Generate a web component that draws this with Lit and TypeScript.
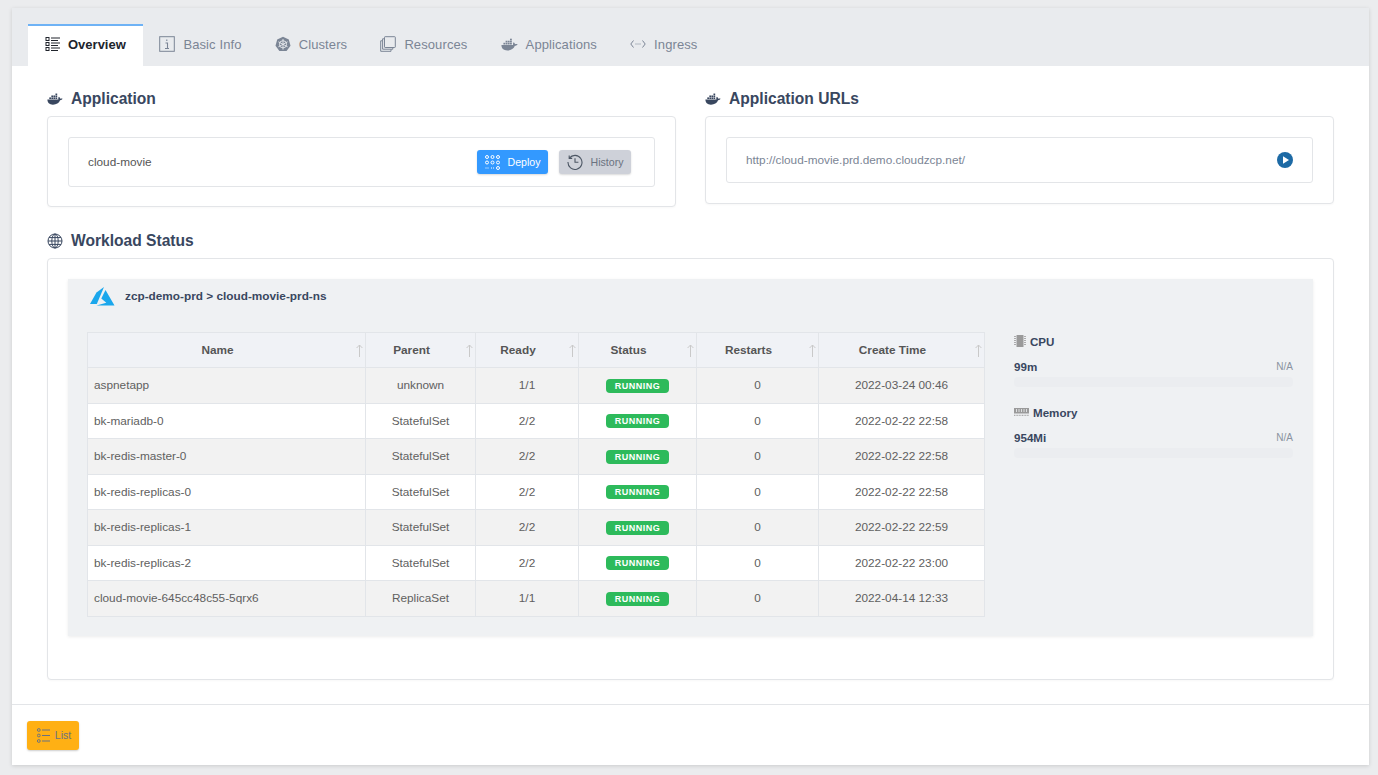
import { LitElement, html, css, svg } from "lit";
import { customElement } from "lit/decorators.js";

interface Row {
  name: string;
  parent: string;
  ready: string;
  time: string;
}

const ROWS: Row[] = [
  { name: "aspnetapp", parent: "unknown", ready: "1/1", time: "2022-03-24 00:46" },
  { name: "bk-mariadb-0", parent: "StatefulSet", ready: "2/2", time: "2022-02-22 22:58" },
  { name: "bk-redis-master-0", parent: "StatefulSet", ready: "2/2", time: "2022-02-22 22:58" },
  { name: "bk-redis-replicas-0", parent: "StatefulSet", ready: "2/2", time: "2022-02-22 22:58" },
  { name: "bk-redis-replicas-1", parent: "StatefulSet", ready: "2/2", time: "2022-02-22 22:59" },
  { name: "bk-redis-replicas-2", parent: "StatefulSet", ready: "2/2", time: "2022-02-22 23:00" },
  { name: "cloud-movie-645cc48c55-5qrx6", parent: "ReplicaSet", ready: "1/1", time: "2022-04-14 12:33" },
];

const COLUMNS = [
  { label: "Name", width: 278 },
  { label: "Parent", width: 110 },
  { label: "Ready", width: 103 },
  { label: "Status", width: 118 },
  { label: "Restarts", width: 122 },
  { label: "Create Time", width: 167 },
];

// whale, shared by the tabs and the section titles
const whale = (size: number) => html`<svg width=${size} height=${size} viewBox="0 0 24 24" fill="currentColor">
  <rect x="3.4" y="9.6" width="2.6" height="2.4" />
  <rect x="6.5" y="9.6" width="2.6" height="2.4" />
  <rect x="9.6" y="9.6" width="2.6" height="2.4" />
  <rect x="12.7" y="9.6" width="2.6" height="2.4" />
  <rect x="6.5" y="6.7" width="2.6" height="2.4" />
  <rect x="9.6" y="6.7" width="2.6" height="2.4" />
  <rect x="12.7" y="6.7" width="2.6" height="2.4" />
  <rect x="12.7" y="3.8" width="2.6" height="2.4" />
  <path d="M.6 12.8h16.6c-.5-1.3-.3-3 .7-4 1 .6 1.7 1.6 1.8 2.7 1.200-.5 2.800-.4 3.700.3-.7 1.500-2.200 2.200-3.800 2.100C18 18.300 14 20.500 9 20.500c-5.500 0-8.400-3.200-8.400-7.700z" />
</svg>`;

const overviewIcon = html`<svg width="16" height="16" viewBox="0 0 16 16" fill="none" stroke="currentColor">
  <rect x="1" y="1.500" width="3" height="3" /><rect x="1" y="6.500" width="3" height="3" /><rect x="1" y="11.500" width="3" height="3" />
  <path d="M6 2h9M6 4.500h7M6 7h9M6 9.500h7M6 12h9M6 14.500h7" stroke-width="1.100" />
</svg>`;

const infoIcon = html`<svg width="16" height="16" viewBox="0 0 16 16" fill="none" stroke="currentColor">
  <rect x=".7" y=".7" width="14.600" height="14.600" />
  <path d="M6.500 7h2v5M6 12.500h4M7.800 3.600v1.400" stroke-width="1.100" />
</svg>`;

const k8sIcon = html`<svg width="16" height="16" viewBox="0 0 16 16">
  <path fill="currentColor" d="M8 0l5.800 2.800 1.700 6.200-3.900 5.300H4.400L.5 9l1.700-6.200z" transform="translate(0 .8)" />
  <g stroke="#e9ebee" stroke-width=".9" fill="none">
    <circle cx="8" cy="8.300" r="3.600" />
    <path d="M8 3v10.600M3.400 5.800l9.200 5M12.600 5.800l-9.200 5" />
  </g>
</svg>`;

const resourcesIcon = html`<svg width="16" height="16" viewBox="0 0 16 16" fill="none" stroke="currentColor">
  <rect x="4.500" y=".7" width="10.800" height="10.800" rx=".6" />
  <path d="M4.500 2.800H2.600v10.400h10.200v-1.700M2.600 4.800H.7v10.500h10.300v-2.100" />
</svg>`;

const ingressIcon = html`<svg width="16" height="16" viewBox="0 0 16 16" fill="none" stroke="currentColor">
  <path d="M3.500 4.500L.8 8l2.700 3.500M12.500 4.500L15.200 8l-2.700 3.500" />
  <path d="M5.500 8h1M7.500 8h1M9.500 8h1" />
</svg>`;

const TABS = [
  { label: "Overview", icon: overviewIcon, active: true },
  { label: "Basic Info", icon: infoIcon },
  { label: "Clusters", icon: k8sIcon },
  { label: "Resources", icon: resourcesIcon },
  { label: "Applications", icon: whale(17) },
  { label: "Ingress", icon: ingressIcon },
];

const deployIcon = html`<svg width="15" height="15" viewBox="0 0 15 15" fill="none" stroke="currentColor" stroke-width="1">
  ${[2, 7.500, 13].map((y) =>
    [2, 7.500, 13].map((x) =>
      y === 13 && x < 13
        ? svg`<path d="M${x - 1.500} 13h3" stroke-dasharray="1 1" />`
        : svg`<circle cx=${x} cy=${y} r="1.500" />`,
    ),
  )}
</svg>`;

const historyIcon = html`<svg width="16" height="16" viewBox="0 0 16 16" fill="none" stroke="currentColor" stroke-width="1.100">
  <path d="M2.400 4.200A7 7 0 1 1 1 8" />
  <path d="M2.200 1.400v3h3M8 4.300V8.300h3.400" />
</svg>`;

const playIcon = html`<svg width="16" height="16" viewBox="0 0 16 16">
  <circle cx="8" cy="8" r="8" fill="#1d6aa5" />
  <path d="M6 4.200l6 3.800-6 3.800z" fill="#fff" />
</svg>`;

const globeIcon = html`<svg width="16" height="16" viewBox="0 0 16 16" fill="none" stroke="currentColor" stroke-width="1">
  <circle cx="8" cy="8" r="7" />
  <ellipse cx="8" cy="8" rx="3.200" ry="7" />
  <path d="M1 8h14M2 4.600h12M2 11.400h12M8 1v14" />
</svg>`;

const azureIcon = html`<svg width="25" height="19" viewBox="0 0 25 19">
  <path fill="#1aa7ec" d="M14 0L6.500 5.500 0 17h6.800z" />
  <path fill="#1aa7ec" d="M15.500 3l-4.200 8.500 5 4.200L6.500 18.400H24.500z" />
</svg>`;

const cpuIcon = html`<svg width="12" height="12" viewBox="0 0 12 12" fill="#9a9a9a">
  <rect x="2.500" y="0" width="7" height="12" rx=".5" />
  <path d="M0 1.500h2M0 3.500h2M0 5.500h2M0 7.500h2M0 9.500h2M10 1.500h2M10 3.500h2M10 5.500h2M10 7.500h2M10 9.500h2" stroke="#9a9a9a" stroke-width=".8" />
</svg>`;

const memoryIcon = html`<svg width="15" height="8" viewBox="0 0 15 8">
  <path fill="#9a9a9a" d="M0 0h15v5.500H0z" />
  <path d="M2.500 1v3M5 1v3M7.500 1v3M10 1v3M12.500 1v3" stroke="#eff1f3" stroke-width=".8" />
  <path d="M0 7.300h15" stroke="#9a9a9a" stroke-dasharray="1 .6" />
</svg>`;

const listIcon = html`<svg width="14" height="15" viewBox="0 0 14 15" fill="none" stroke="#6b7280" stroke-width="1">
  <circle cx="1.800" cy="2" r="1.400" /><circle cx="1.800" cy="7.500" r="1.400" /><circle cx="1.800" cy="13" r="1.400" />
  <path d="M5 2h8M5 7.500h8M5 13h8" stroke-width="1.200" />
</svg>`;

const sortIcon = html`<svg class="sort" width="7" height="13" viewBox="0 0 7 13" fill="none" stroke="#c9c9c9">
  <path d="M3.500 13V1M.6 4L3.500 1l2.900 3" />
</svg>`;

@customElement("app-root")
export class AppRoot extends LitElement {
  static styles = css`
    :host {
      display: block;
      width: 1378px;
      height: 775px;
      box-sizing: border-box;
      padding: 8px 9px 10px 12px;
      background: #ebecee;
      font-family: "Liberation Sans", Arial, sans-serif;
      color: #555;
      overflow: hidden;
    }

    .shell {
      display: flex;
      flex-direction: column;
      height: 100%;
      background: #fff;
      box-shadow: 0 1px 4px rgba(0, 0, 0, 0.14);
    }

    .tabs {
      display: flex;
      align-items: flex-end;
      height: 58px;
      box-sizing: border-box;
      padding-left: 16px;
      background: #e9ebee;
      flex: none;
    }

    .tab {
      display: flex;
      align-items: center;
      gap: 8px;
      height: 42px;
      box-sizing: border-box;
      padding: 0 16.600px 4px;
      border-top: 2px solid transparent;
      font-size: 13px;
      letter-spacing: 0.1px;
      color: #7b8595;
    }

    .tab.active {
      gap: 7px;
      padding: 0 17px 4px;
      background: #fff;
      border-top-color: #6eb2f5;
      font-weight: 700;
      letter-spacing: 0;
      color: #20242c;
    }

    .tab svg {
      display: block;
      flex: none;
    }

    .content {
      flex: 1;
      padding: 23px 35px 0;
    }

    .top {
      display: grid;
      grid-template-columns: 629px 629px;
      gap: 29px;
      align-items: start;
      margin-bottom: 24px;
    }

    .title {
      display: flex;
      align-items: center;
      gap: 8px;
      height: 18px;
      box-sizing: border-box;
      padding-top: 2px;
      margin-bottom: 9px;
      font-size: 15.600px;
      font-weight: 700;
      color: #39475f;
    }

    .box {
      border: 1px solid #e3e5e8;
      border-radius: 4px;
      padding: 20px;
      background: #fff;
      box-shadow: 0 1px 2px rgba(0, 0, 0, 0.03);
    }

    .box.app-box {
      padding-bottom: 19px;
    }

    .field {
      display: flex;
      align-items: center;
      justify-content: space-between;
      box-sizing: border-box;
      border: 1px solid #e3e5e8;
      border-radius: 3px;
      padding: 0 23px 0 19px;
      font-size: 11.800px;
      color: #555;
    }

    .field.app {
      height: 50px;
    }

    .field.url {
      height: 46px;
      padding-right: 19px;
      color: #7b8595;
    }

    .field.url svg {
      display: block;
    }

    .actions {
      display: flex;
      gap: 11px;
    }

    .btn {
      display: flex;
      align-items: center;
      justify-content: center;
      gap: 8px;
      height: 24px;
      border-radius: 3px;
      font-size: 10.600px;
      box-shadow: 0 1px 2px rgba(0, 0, 0, 0.15);
    }

    .btn.deploy {
      width: 71px;
      background: #3399ff;
      color: #fff;
    }

    .btn.history {
      width: 72px;
      background: #ced1d9;
      color: #6b7280;
    }

    .btn.history svg {
      color: #4b5563;
    }

    .status-box {
      height: 422px;
      box-sizing: border-box;
    }

    .panel {
      background: #eff1f3;
      box-shadow: 0 1px 3px rgba(0, 0, 0, 0.08);
      padding: 0 20px 19px 19px;
    }

    .panel-head {
      display: flex;
      align-items: center;
      gap: 10px;
      height: 53px;
      padding: 0 0 19px 3px;
      box-sizing: border-box;
      font-size: 11.800px;
      font-weight: 700;
      color: #39475f;
    }

    .panel-body {
      display: flex;
      gap: 29px;
    }

    table {
      border-collapse: collapse;
      table-layout: fixed;
      width: 897px;
      font-size: 11.800px;
      color: #606060;
      flex: none;
    }

    th,
    td {
      border: 1px solid #e2e5e9;
      padding: 0;
      text-align: center;
      box-sizing: border-box;
    }

    th {
      position: relative;
      height: 35px;
      padding-right: 18px;
      font-size: 11.800px;
      font-weight: 700;
      color: #555;
      background: #f0f2f6;
    }

    .sort {
      position: absolute;
      right: 2px;
      top: 11px;
    }

    td {
      height: 35.500px;
      background: #fff;
    }

    tr:nth-child(odd) td {
      background: #f2f2f2;
    }

    td.name {
      text-align: left;
      padding-left: 6px;
    }

    .badge {
      display: inline-block;
      width: 63px;
      height: 14px;
      line-height: 15px;
      border-radius: 4px;
      background: #2dba5b;
      color: #fff;
      font-size: 9px;
      font-weight: 700;
      letter-spacing: 0.5px;
      vertical-align: middle;
    }

    .side {
      flex: 1;
      font-size: 11.600px;
      font-weight: 700;
      color: #39475f;
    }

    .metric {
      margin-bottom: 16px;
    }

    .metric-head {
      display: flex;
      align-items: center;
      gap: 4px;
      height: 18px;
    }

    .metric-vals {
      display: flex;
      align-items: center;
      justify-content: space-between;
      height: 14px;
      margin: 9px 0 4px;
    }

    .na {
      font-size: 10px;
      font-weight: 400;
      color: #8a93a0;
    }

    .bar {
      height: 10px;
      border-radius: 4px;
      background: #ebedf0;
    }

    .footer {
      flex: none;
      display: flex;
      align-items: center;
      height: 61px;
      box-sizing: border-box;
      border-top: 1px solid #e3e5e8;
      padding-left: 15px;
    }

    .list-btn {
      display: flex;
      align-items: center;
      justify-content: center;
      gap: 4px;
      width: 52px;
      height: 29px;
      box-sizing: border-box;
      padding-left: 2px;
      border-radius: 3px;
      background: #ffb014;
      color: #6b7280;
      font-size: 10.500px;
      box-shadow: 0 1px 2px rgba(0, 0, 0, 0.2);
    }
  `;

  private renderMetric(icon: unknown, label: string, value: string) {
    return html`
      <div class="metric">
        <div class="metric-head">${icon}<span>${label}</span></div>
        <div class="metric-vals"><span>${value}</span><span class="na">N/A</span></div>
        <div class="bar"></div>
      </div>
    `;
  }

  render() {
    return html`
      <div class="shell">
        <div class="tabs">
          ${TABS.map(
            (t) => html`<div class="tab ${t.active ? "active" : ""}">${t.icon}<span>${t.label}</span></div>`,
          )}
        </div>

        <div class="content">
          <div class="top">
            <section>
              <div class="title">${whale(16)}<span>Application</span></div>
              <div class="box app-box">
                <div class="field app">
                  <span>cloud-movie</span>
                  <div class="actions">
                    <div class="btn deploy">${deployIcon}<span>Deploy</span></div>
                    <div class="btn history">${historyIcon}<span>History</span></div>
                  </div>
                </div>
              </div>
            </section>
            <section>
              <div class="title">${whale(16)}<span>Application URLs</span></div>
              <div class="box">
                <div class="field url">
                  <span>http://cloud-movie.prd.demo.cloudzcp.net/</span>
                  ${playIcon}
                </div>
              </div>
            </section>
          </div>

          <section>
            <div class="title">${globeIcon}<span>Workload Status</span></div>
            <div class="box status-box">
              <div class="panel">
                <div class="panel-head">${azureIcon}<span>zcp-demo-prd &gt; cloud-movie-prd-ns</span></div>
                <div class="panel-body">
                  <table>
                    <colgroup>
                      ${COLUMNS.map((c, i) => html`<col style="width:${i === 5 ? c.width - 1 : c.width}px" />`)}
                    </colgroup>
                    <thead>
                      <tr>
                        ${COLUMNS.map((c) => html`<th>${c.label}${sortIcon}</th>`)}
                      </tr>
                    </thead>
                    <tbody>
                      ${ROWS.map(
                        (r) => html`
                          <tr>
                            <td class="name">${r.name}</td>
                            <td>${r.parent}</td>
                            <td>${r.ready}</td>
                            <td><span class="badge">RUNNING</span></td>
                            <td>0</td>
                            <td>${r.time}</td>
                          </tr>
                        `,
                      )}
                    </tbody>
                  </table>
                  <div class="side">
                    ${this.renderMetric(cpuIcon, "CPU", "99m")}
                    ${this.renderMetric(memoryIcon, "Memory", "954Mi")}
                  </div>
                </div>
              </div>
            </div>
          </section>
        </div>

        <div class="footer">
          <div class="list-btn">${listIcon}<span>List</span></div>
        </div>
      </div>
    `;
  }
}

declare global {
  interface HTMLElementTagNameMap {
    "app-root": AppRoot;
  }
}
